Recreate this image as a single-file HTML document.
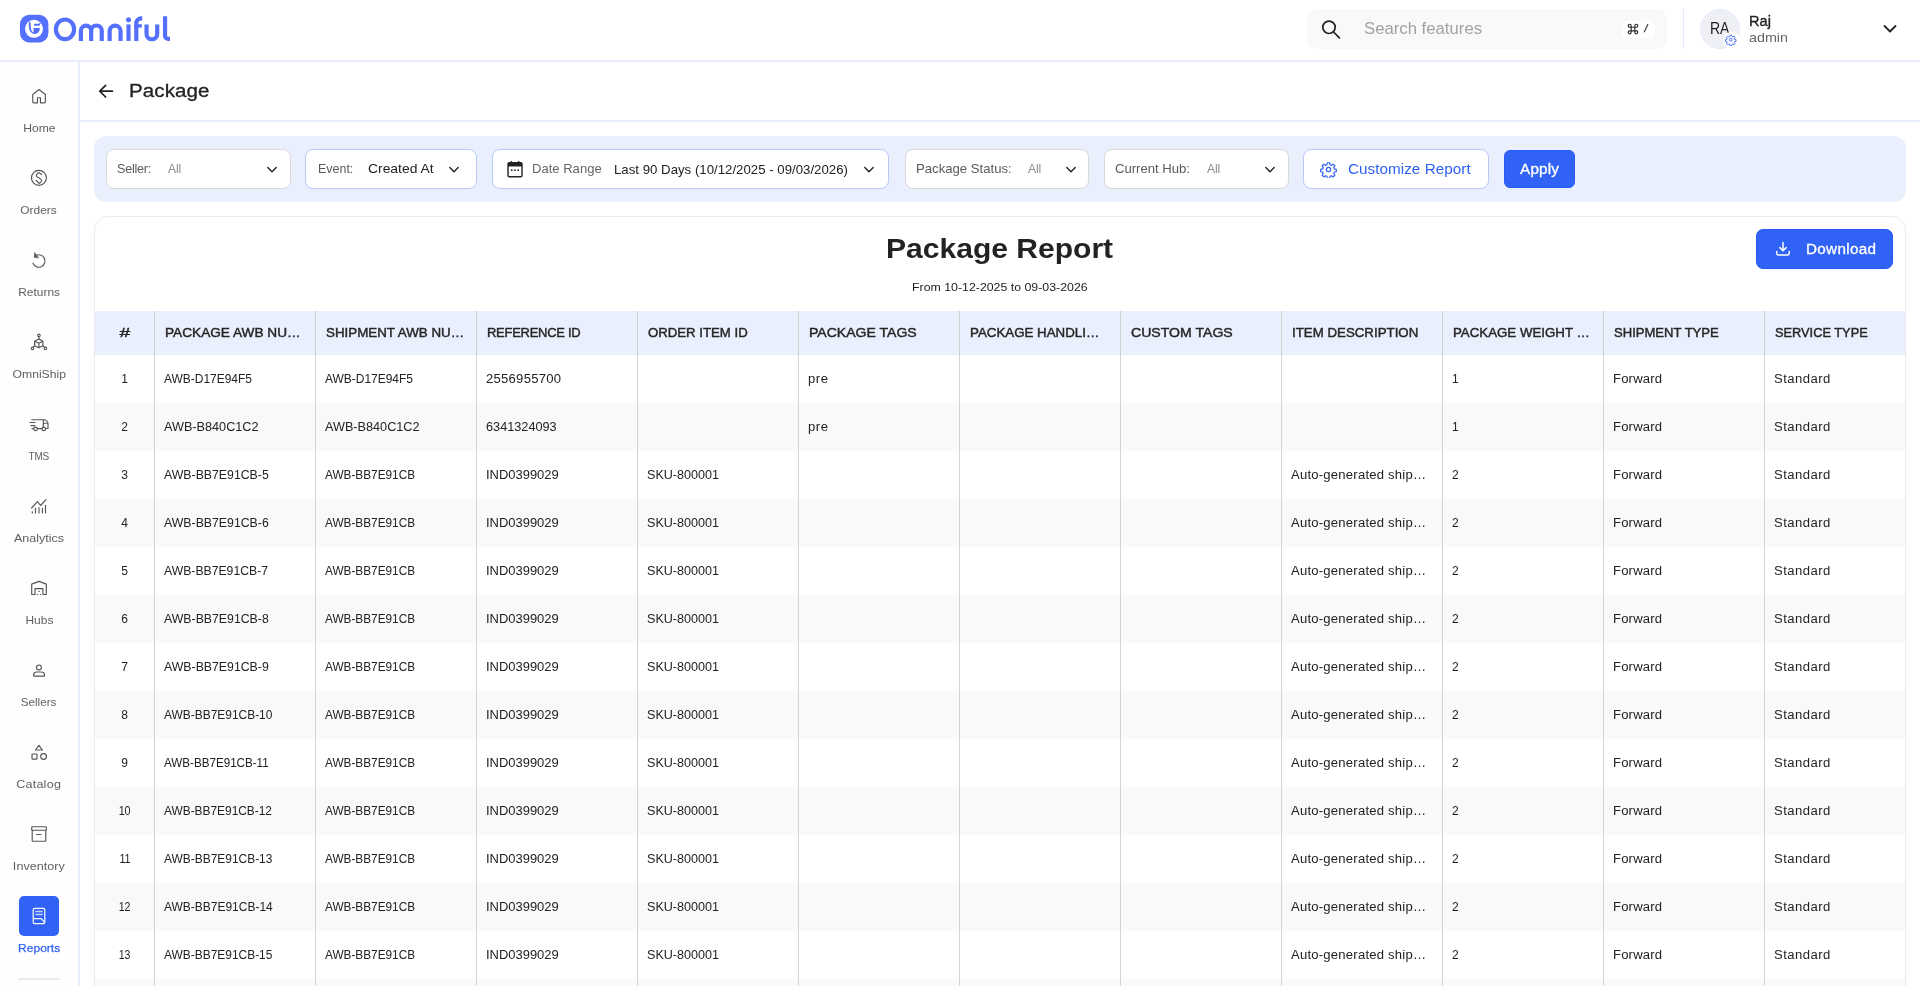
<!DOCTYPE html>
<html><head><meta charset="utf-8"><title>Package Report</title>
<style>
*{box-sizing:border-box;margin:0;padding:0}
html,body{width:1920px;height:986px;overflow:hidden;background:#fff;font-family:"Liberation Sans",sans-serif;color:#222;}
.abs{position:absolute}
span.t{white-space:nowrap;display:inline-block}
#hdr,#side,#main{will-change:transform}
#hdr{position:absolute;left:0;top:0;width:1920px;height:62px;background:#fff;border-bottom:2px solid #e8eefd}
#side{position:absolute;left:0;top:62px;width:80px;height:924px;background:#fefefe;border-right:2px solid #e8eefd}
#main{position:absolute;left:80px;top:62px;width:1840px;height:924px;background:#fff}
.nl{position:absolute;left:0;width:78px;height:16px;line-height:16px;text-align:center;font-size:11.5px;color:#5f5f5f}
#pghdr{position:absolute;left:0;top:0;width:1840px;height:60px;border-bottom:2px solid #e8eefd}
#fbar{position:absolute;left:14px;top:74px;width:1812px;height:66px;background:#e9effd;border-radius:12px}
.fb{position:absolute;top:13px;height:40px;background:#fff;border:1px solid #d9d9d9;border-radius:8px;font-size:13px;line-height:38px;color:#666}
.fb.blue{border-color:#b9c9fa}
.fb .k{position:absolute;top:0}
.fb .chev{position:absolute;top:14px;width:12px;height:12px}
#card{position:absolute;left:14px;top:154px;width:1812px;height:800px;border:1px solid #ececee;border-radius:14px 14px 0 0;background:#fff;overflow:hidden}
#thead{position:absolute;left:0;top:94px;width:1810px;height:44px;background:#e9effd}
.th{position:absolute;top:0;height:44px;line-height:44px;font-size:13.7px;-webkit-text-stroke:0.45px #262626;color:#262626;padding-left:10px;border-left:1px solid #cfcfcf}
.row{position:absolute;left:0;width:1810px;height:48px;font-size:12px;line-height:48px;color:#222}
.row.g{background:#f9f9f9}
.td{position:absolute;top:0;height:48px;padding-left:9px;border-left:1px solid #d4d4d4}
</style></head><body>
<div id="hdr">
<svg class="abs" style="left:0;top:0" width="200" height="60" viewBox="0 0 200 60">
<rect x="20" y="14.8" width="28.4" height="27.8" rx="9.5" ry="9.5" fill="#5570fc"/>
<circle cx="34" cy="28.8" r="9" fill="#fff"/>
<path d="M29.3 21.6C28 27 29 32.6 33.6 33.9C37.4 34.6 40.2 31.6 39.7 27.8L38.6 27.8L38.6 28L33.5 28L33.5 32.6C31.2 31.4 30.3 27.6 30.8 22.6Z" fill="#5570fc"/>
<path d="M34.2 28.6H38.9C39.2 31 37 33.6 34.2 33.2Z" fill="#5570fc"/>
<path d="M34.1 23.8H38.4L41 22.6L39.4 25.7H34.1Z" fill="#5570fc"/>
<g fill="none" stroke="#5570fc" stroke-width="4.2">
<ellipse cx="65" cy="29.35" rx="9.1" ry="9.85"/>
<path d="M80.9 40.9V30.8a5.125 5.125 0 0 1 10.25 0V40.9M91.15 30.8a5.3 5.3 0 0 1 10.6 0V40.9"/>
<path d="M109.65 40.9V31.15a5.45 5.45 0 0 1 10.9 0V40.9"/>
<path d="M128.5 24.4V40.9"/>
<path d="M136.3 40.9V23.3a5 5 0 0 1 5 -5h0.9"/>
<path d="M134.2 25.9H141.9" stroke-width="3.3"/>
<path d="M146.55 24.4V33.9a5.325 5.325 0 0 0 10.65 0V24.4"/>
<path d="M165.05 16.2V35.8a3 3 0 0 0 3 3H170"/>
</g>
<circle cx="128.5" cy="19.7" r="2.5" fill="#5570fc"/>
</svg>
<div class="abs" style="left:1307px;top:9px;width:360px;height:40px;background:#f9f9f9;border-radius:10px"></div>
<svg class="abs" style="left:1320px;top:18px" width="22" height="22" viewBox="0 0 22 22" fill="none" stroke="#222" stroke-width="1.7"><circle cx="9" cy="9.3" r="6.2"/><path d="M13.6 14L19.4 19.8" stroke-linecap="round"/></svg>
<span class="t abs" style="letter-spacing:0px;transform:scaleX(1.045);transform-origin:left center;left:1364px;top:18px;font-size:16px;line-height:22px;color:#a2a2a2">Search features</span>
<div class="abs" style="left:1622px;top:20.5px;width:33px;height:17.5px;background:#fff;border-radius:5px"></div>
<svg class="abs" style="left:1627px;top:23.2px" width="12" height="12" viewBox="0 0 12 12" fill="none" stroke="#2a2a2a" stroke-width="1.15"><path d="M4.2 4.2H7.8V7.8H4.2ZM4.2 4.2H2.7A1.5 1.5 0 1 1 4.2 2.7ZM7.8 4.2V2.7A1.5 1.5 0 1 1 9.3 4.2ZM7.8 7.8H9.3A1.5 1.5 0 1 1 7.8 9.3ZM4.2 7.8V9.3A1.5 1.5 0 1 1 2.7 7.8Z"/></svg>
<svg class="abs" style="left:1642px;top:22.2px" width="8" height="12" viewBox="0 0 8 12" fill="none" stroke="#333" stroke-width="1.1"><path d="M2.2 10.3L6 2"/></svg>
<div class="abs" style="left:1683px;top:9px;width:1px;height:40px;background:#e3e9fb"></div>
<div class="abs" style="left:1700px;top:9px;width:40px;height:40px;border-radius:20px;background:#eff0f5;border:1px solid #e6ebfd"></div>
<span class="t abs" style="letter-spacing:-0.25px;transform:scaleX(0.878);transform-origin:left center;left:1710.2px;top:17.6px;font-size:16px;line-height:22px;color:#222">RA</span>
<div class="abs" style="left:1722.5px;top:31.5px;width:17px;height:17px;border-radius:8.5px;background:#fff"></div>
<svg class="abs" style="left:1725.25px;top:34.25px" width="11.5" height="11.5" viewBox="0 0 24 24" fill="none" stroke="#3d66f2" stroke-width="2" stroke-linejoin="round"><circle cx="12" cy="12" r="3"/><path d="M10.3 2.5h3.4l.6 2.8 1.9.8 2.4-1.6 2.4 2.4-1.6 2.4.8 1.9 2.8.6v3.4l-2.8.6-.8 1.9 1.6 2.4-2.4 2.4-2.4-1.6-1.9.8-.6 2.8h-3.4l-.6-2.8-1.9-.8-2.4 1.6-2.4-2.4 1.6-2.4-.8-1.9-2.8-.6v-3.4l2.8-.6.8-1.9-1.6-2.4 2.4-2.4 2.4 1.6 1.9-.8z"/></svg>
<span class="t abs" style="letter-spacing:0px;transform:scaleX(0.977);transform-origin:left center;left:1749px;top:11px;font-size:15px;line-height:20px;color:#222;-webkit-text-stroke:0.35px #222">Raj</span>
<span class="t abs" style="letter-spacing:0px;transform:scaleX(1.06);transform-origin:left center;left:1749px;top:29px;font-size:13.5px;line-height:18px;color:#666">admin</span>
<svg class="abs" style="left:1882px;top:23px" width="16" height="12" viewBox="0 0 16 12" fill="none" stroke="#222" stroke-width="1.8" stroke-linecap="round" stroke-linejoin="round"><path d="M2.5 3L8 8.5L13.5 3"/></svg>

</div>
<div id="side">
<svg class="abs" style="left:27px;top:23px" width="24" height="24" viewBox="0 0 24 24" fill="none" stroke="#555" stroke-width="1.15" stroke-linecap="round"><path d="M5.75 9.5L12.05 4.5L18.35 9.5V16.9a.9.9 0 0 1-.9.9H13.45V12.75H10.45V17.8H6.65a.9.9 0 0 1-.9-.9Z" stroke-linejoin="round"/></svg>
<div class="nl" style="top:58px"><span class="t" style="letter-spacing:0px;transform:scaleX(1.056);transform-origin:center center;">Home</span></div>
<svg class="abs" style="left:27px;top:104px" width="24" height="24" viewBox="0 0 24 24" fill="none" stroke="#555" stroke-width="1.15" stroke-linecap="round"><circle cx="11.9" cy="11.85" r="7.5"/><path d="M14.7 8.5L11.5 6.6C10.2 7.6 9.3 8.6 9.3 9.7C9.3 11.6 14.7 12.2 14.7 14.6C14.7 15.8 13.4 16.8 12.2 17.4L9.2 14.5" stroke-linejoin="round"/></svg>
<div class="nl" style="top:140px"><span class="t" style="letter-spacing:0px;transform:scaleX(1.038);transform-origin:center center;">Orders</span></div>
<svg class="abs" style="left:27px;top:186.5px" width="24" height="24" viewBox="0 0 24 24" fill="none" stroke="#555" stroke-width="1.15" stroke-linecap="round"><path d="M8.6 6.7A6.2 6.2 0 1 1 6 14.2"/><path d="M7.6 3.8L7.2 8.2L11.3 8.9Z" fill="#555" stroke-width=".6" stroke-linejoin="round"/></svg>
<div class="nl" style="top:222px"><span class="t" style="letter-spacing:0px;transform:scaleX(1.04);transform-origin:center center;">Returns</span></div>
<svg class="abs" style="left:27px;top:269px" width="24" height="24" viewBox="0 0 24 24" fill="none" stroke="#555" stroke-width="1.15" stroke-linecap="round"><path d="M11.9 8L15.9 10.2V14.7L11.9 16.8L7.6 14.7V10.2ZM7.6 10.2L11.9 12.3L15.9 10.2M11.9 12.3V16.8" stroke-linejoin="round"/><circle cx="11.9" cy="4.4" r="1.25"/><circle cx="5.5" cy="17.4" r="1.25"/><circle cx="18.4" cy="17.4" r="1.25"/><path d="M11.9 5.7V8M7.6 14.7L6.3 16.4M15.9 14.7L17.6 16.4"/></svg>
<div class="nl" style="top:304px"><span class="t" style="letter-spacing:0px;transform:scaleX(1.059);transform-origin:center center;">OmniShip</span></div>
<svg class="abs" style="left:27px;top:351px" width="24" height="24" viewBox="0 0 24 24" fill="none" stroke="#555" stroke-width="1.15" stroke-linecap="round"><path d="M4.75 6.7H16.5C19 6.7 21 8.5 21 11V15.5H19M16.3 10.2H21M16.3 6.7V14M10.4 15.6H15M3 9.5H8M4 12.6H8M5 15.6H6.4" stroke-linejoin="round"/><circle cx="8.6" cy="15.9" r="1.75"/><circle cx="16.8" cy="15.9" r="1.75"/></svg>
<div class="nl" style="top:386px"><span class="t" style="letter-spacing:-0.25px;transform:scaleX(0.875);transform-origin:center center;">TMS</span></div>
<svg class="abs" style="left:27px;top:433px" width="24" height="24" viewBox="0 0 24 24" fill="none" stroke="#555" stroke-width="1.15" stroke-linecap="round"><path d="M4.6 13L10.4 6.7L13.6 10.5L19 4.6" stroke-linejoin="round"/><path d="M5.3 16.8V18M8.5 13.2V18M12 12.6V18M15.4 13.2V18M18.5 10.2V18"/></svg>
<div class="nl" style="top:468px"><span class="t" style="letter-spacing:0px;transform:scaleX(1.086);transform-origin:center center;">Analytics</span></div>
<svg class="abs" style="left:27px;top:515px" width="24" height="24" viewBox="0 0 24 24" fill="none" stroke="#555" stroke-width="1.15" stroke-linecap="round"><path d="M4.7 7.1L12.05 4.4L19.3 7.1V17.5H15.9V11.6H8V17.5H4.7Z" stroke-linejoin="round"/><path d="M10.2 17.5h.5M13.2 17.5h.5M11.6 14.4h.8" stroke-width="1"/></svg>
<div class="nl" style="top:550px"><span class="t" style="letter-spacing:0px;transform:scaleX(1.042);transform-origin:center center;">Hubs</span></div>
<svg class="abs" style="left:27px;top:597px" width="24" height="24" viewBox="0 0 24 24" fill="none" stroke="#555" stroke-width="1.15" stroke-linecap="round"><circle cx="11.9" cy="8.4" r="2.45"/><path d="M6.7 17.1V15.2C6.7 13.6 8.5 13 10 13H14C15.5 13 17.4 13.6 17.4 15.2V17.1Z" stroke-linejoin="round"/></svg>
<div class="nl" style="top:632px"><span class="t" style="letter-spacing:0px;transform:scaleX(1.015);transform-origin:center center;">Sellers</span></div>
<svg class="abs" style="left:27px;top:679px" width="24" height="24" viewBox="0 0 24 24" fill="none" stroke="#555" stroke-width="1.15" stroke-linecap="round"><path d="M11.9 4.3L15.4 9H8.4Z" stroke-linejoin="round"/><rect x="5" y="12.95" width="5" height="5.1" rx=".5"/><circle cx="16.6" cy="15.5" r="2.9"/></svg>
<div class="nl" style="top:714px"><span class="t" style="letter-spacing:0.23px;transform:scaleX(1.09);transform-origin:center center;">Catalog</span></div>
<svg class="abs" style="left:27px;top:761px" width="24" height="24" viewBox="0 0 24 24" fill="none" stroke="#555" stroke-width="1.15" stroke-linecap="round"><rect x="4.7" y="3.7" width="14.6" height="3.5" rx=".7"/><path d="M5.2 7.2V17.6a.6.6 0 0 0 .6.6H18.2a.6.6 0 0 0 .6-.6V7.2M9.5 11.5H13.9" stroke-linejoin="round"/></svg>
<div class="nl" style="top:796px"><span class="t" style="letter-spacing:0.05px;transform:scaleX(1.09);transform-origin:center center;">Inventory</span></div>
<div class="abs" style="left:19px;top:834px;width:40px;height:40px;border-radius:5px;background:#2f62f5"></div>
<svg class="abs" style="left:27px;top:842px" width="24" height="24" viewBox="0 0 24 24" fill="none" stroke="#fff" stroke-width="1.2" stroke-linejoin="round"><rect x="6.2" y="4.4" width="11.6" height="15.2" rx="1.4"/><path d="M6.2 14.6H14.2L17.8 18.4"/><path d="M8.4 7.6H15.6M8.4 10.4H15.6" stroke="#c8d4fd" stroke-width="1.5"/></svg>
<div class="nl" style="top:878px;color:#2f62f5;-webkit-text-stroke:0.25px #2f62f5"><span class="t" style="letter-spacing:0px;transform:scaleX(1.045);transform-origin:center center;">Reports</span></div>
<div class="abs" style="left:18px;top:916px;width:42px;height:2px;background:#ebebeb"></div>

</div>
<div id="main">
<div id="pghdr">
<svg class="abs" style="left:16px;top:19px" width="20" height="20" viewBox="0 0 20 20" fill="none" stroke="#222" stroke-width="1.7" stroke-linecap="round" stroke-linejoin="round"><path d="M16.4 10.2H3.8M9.6 4.4L3.8 10.2L9.6 16"/></svg>
<span class="t abs" style="letter-spacing:0.09px;transform:scaleX(1.14);transform-origin:left center;left:49.2px;top:16.5px;font-size:18px;line-height:24px;color:#222;-webkit-text-stroke:0.3px #222">Package</span>

</div>
<div id="fbar">
<div class="fb" style="left:12px;width:185px"><span class="t k" style="letter-spacing:-0.25px;transform:scaleX(0.967);transform-origin:left center;left:10.4px;color:#5a5a5a">Seller:</span><span class="t k" style="letter-spacing:-0.25px;transform:scaleX(0.939);transform-origin:left center;left:61px;color:#8c8c8c">All</span><svg class="chev" style="left:159px" viewBox="0 0 12 12" fill="none" stroke="#222" stroke-width="1.4" stroke-linecap="round" stroke-linejoin="round"><path d="M1.8 3.6L6 7.8L10.2 3.6"/></svg></div>
<div class="fb blue" style="left:211px;width:172px"><span class="t k" style="letter-spacing:0px;transform:scaleX(0.958);transform-origin:left center;left:12px;color:#5a5a5a">Event:</span><span class="t k" style="letter-spacing:0px;transform:scaleX(1.068);transform-origin:left center;left:61.7px;color:#222">Created At</span><svg class="chev" style="left:142.3px" viewBox="0 0 12 12" fill="none" stroke="#222" stroke-width="1.4" stroke-linecap="round" stroke-linejoin="round"><path d="M1.8 3.6L6 7.8L10.2 3.6"/></svg></div>
<div class="fb blue" style="left:398px;width:397px"><svg class="abs" style="left:13px;top:10px" width="18" height="18" viewBox="0 0 18 18"><path d="M3.4 2.6H14.6A1.4 1.4 0 0 1 16 4V15.4A1.4 1.4 0 0 1 14.6 16.8H3.4A1.4 1.4 0 0 1 2 15.4V4A1.4 1.4 0 0 1 3.4 2.6Z" fill="none" stroke="#222" stroke-width="1.4"/><path d="M2 3.6A1 1 0 0 1 3 2.6H15A1 1 0 0 1 16 3.6V6.6H2Z" fill="#222"/><rect x="4.6" y="1" width="1.6" height="3" rx=".8" fill="#222"/><rect x="11.8" y="1" width="1.6" height="3" rx=".8" fill="#222"/><rect x="5" y="9.4" width="1.6" height="1.6" fill="#222"/><rect x="8.2" y="9.4" width="1.6" height="1.6" fill="#222"/><rect x="11.4" y="9.4" width="1.6" height="1.6" fill="#222"/></svg><span class="t k" style="letter-spacing:0px;transform:scaleX(1.004);transform-origin:left center;left:39.3px;color:#666">Date Range</span><span class="t k" style="letter-spacing:0px;transform:scaleX(1.018);transform-origin:left center;left:121.3px;top:1px;color:#222">Last 90 Days (10/12/2025 - 09/03/2026)</span><svg class="chev" style="left:370px" viewBox="0 0 12 12" fill="none" stroke="#222" stroke-width="1.4" stroke-linecap="round" stroke-linejoin="round"><path d="M1.8 3.6L6 7.8L10.2 3.6"/></svg></div>
<div class="fb" style="left:811px;width:184px"><span class="t k" style="letter-spacing:0px;transform:scaleX(1.011);transform-origin:left center;left:10px;color:#5a5a5a">Package Status:</span><span class="t k" style="letter-spacing:-0.25px;transform:scaleX(0.939);transform-origin:left center;left:122.3px;color:#8c8c8c">All</span><svg class="chev" style="left:159px" viewBox="0 0 12 12" fill="none" stroke="#222" stroke-width="1.4" stroke-linecap="round" stroke-linejoin="round"><path d="M1.8 3.6L6 7.8L10.2 3.6"/></svg></div>
<div class="fb" style="left:1010px;width:185px"><span class="t k" style="letter-spacing:0px;transform:scaleX(1.008);transform-origin:left center;left:10px;color:#5a5a5a">Current Hub:</span><span class="t k" style="letter-spacing:-0.25px;transform:scaleX(0.939);transform-origin:left center;left:101.7px;color:#8c8c8c">All</span><svg class="chev" style="left:159px" viewBox="0 0 12 12" fill="none" stroke="#222" stroke-width="1.4" stroke-linecap="round" stroke-linejoin="round"><path d="M1.8 3.6L6 7.8L10.2 3.6"/></svg></div>
<div class="fb blue" style="left:1209px;width:186px"><svg class="abs" style="left:15.5px;top:10.5px" width="17" height="17" viewBox="0 0 24 24" fill="none" stroke="#2f62f5" stroke-width="1.7" stroke-linejoin="round"><circle cx="12" cy="12" r="3.1"/><path d="M10.3 2.5h3.4l.6 2.8 1.9.8 2.4-1.6 2.4 2.4-1.6 2.4.8 1.9 2.8.6v3.4l-2.8.6-.8 1.9 1.6 2.4-2.4 2.4-2.4-1.6-1.9.8-.6 2.8h-3.4l-.6-2.8-1.9-.8-2.4 1.6-2.4-2.4 1.6-2.4-.8-1.9-2.8-.6v-3.4l2.8-.6.8-1.9-1.6-2.4 2.4-2.4 2.4 1.6 1.9-.8z"/></svg><span class="t k" style="letter-spacing:0.03px;transform:scaleX(1.09);transform-origin:left center;left:44.4px;color:#2f62f5;font-size:14px">Customize Report</span></div>
<div class="abs" style="left:1410px;top:14px;width:71px;height:38px;background:#2f62f5;border:1px solid #2a5af1;border-radius:6px"><span class="t abs" style="letter-spacing:0.19px;transform:scaleX(1.09);transform-origin:left center;left:15px;top:-1px;line-height:38px;font-size:14px;color:#fff;-webkit-text-stroke:0.3px #fff">Apply</span></div>

</div>
<div id="card">
<span class="t abs" style="letter-spacing:0px;transform:scaleX(1.073);transform-origin:left center;left:791px;top:14px;font-size:28px;font-weight:bold;line-height:36px;color:#222">Package Report</span>
<span class="t abs" style="letter-spacing:0px;transform:scaleX(1.073);transform-origin:left center;left:816.9px;top:62px;font-size:11.5px;line-height:16px;color:#222">From 10-12-2025 to 09-03-2026</span>
<div class="abs" style="left:1661px;top:12px;width:137px;height:40px;background:#2f62f5;border:1px solid #2a5af1;border-radius:7px"><svg class="abs" style="left:17px;top:10px" width="18" height="18" viewBox="0 0 18 18" fill="none" stroke="#fff" stroke-width="1.5" stroke-linecap="round" stroke-linejoin="round"><path d="M9 2.6V10.6M5.8 7.6L9 10.8L12.2 7.6M2.8 11.4V13.4A1.6 1.6 0 0 0 4.4 15H13.6A1.6 1.6 0 0 0 15.2 13.4V11.4"/></svg><span class="t abs" style="letter-spacing:0.28px;transform:scaleX(1.09);transform-origin:left center;left:48.7px;top:-1px;line-height:40px;font-size:14px;color:#fff;-webkit-text-stroke:0.3px #fff">Download</span></div>

<div id="thead"><div class="th" style="left:0;width:59px;border-left:none;padding:0;text-align:center"><span class="t" style="transform:scaleX(1.4)">#</span></div><div class="th" style="left:59px;width:161px"><span class="t" style="letter-spacing:0px;transform:scaleX(0.997);transform-origin:left center;">PACKAGE AWB NU…</span></div><div class="th" style="left:220px;width:161px"><span class="t" style="letter-spacing:0px;transform:scaleX(0.976);transform-origin:left center;">SHIPMENT AWB NU…</span></div><div class="th" style="left:381px;width:161px"><span class="t" style="letter-spacing:-0.25px;transform:scaleX(0.945);transform-origin:left center;">REFERENCE ID</span></div><div class="th" style="left:542px;width:161px"><span class="t" style="letter-spacing:0px;transform:scaleX(0.964);transform-origin:left center;">ORDER ITEM ID</span></div><div class="th" style="left:703px;width:161px"><span class="t" style="letter-spacing:0px;transform:scaleX(1.026);transform-origin:left center;">PACKAGE TAGS</span></div><div class="th" style="left:864px;width:161px"><span class="t" style="letter-spacing:0px;transform:scaleX(0.973);transform-origin:left center;">PACKAGE HANDLI…</span></div><div class="th" style="left:1025px;width:161px"><span class="t" style="letter-spacing:-0.0px;transform:scaleX(1.029);transform-origin:left center;">CUSTOM TAGS</span></div><div class="th" style="left:1186px;width:161px"><span class="t" style="letter-spacing:0px;transform:scaleX(0.971);transform-origin:left center;">ITEM DESCRIPTION</span></div><div class="th" style="left:1347px;width:161px"><span class="t" style="letter-spacing:0px;transform:scaleX(0.97);transform-origin:left center;">PACKAGE WEIGHT …</span></div><div class="th" style="left:1508px;width:161px"><span class="t" style="letter-spacing:0px;transform:scaleX(0.954);transform-origin:left center;">SHIPMENT TYPE</span></div><div class="th" style="left:1669px;width:161px"><span class="t" style="letter-spacing:0px;transform:scaleX(0.935);transform-origin:left center;">SERVICE TYPE</span></div></div>
<div class="row" style="top:138px"><div class="td" style="left:0;width:59px;border-left:none;padding:0;text-align:center">1</div><div class="td" style="left:59px;width:161px"><span class="t" style="letter-spacing:0px;transform:scaleX(0.997);transform-origin:left center;">AWB-D17E94F5</span></div><div class="td" style="left:220px;width:161px"><span class="t" style="letter-spacing:0px;transform:scaleX(0.997);transform-origin:left center;">AWB-D17E94F5</span></div><div class="td" style="left:381px;width:161px"><span class="t" style="letter-spacing:0.23px;transform:scaleX(1.09);transform-origin:left center;">2556955700</span></div><div class="td" style="left:542px;width:161px"></div><div class="td" style="left:703px;width:161px"><span class="t" style="letter-spacing:0.5px;transform:scaleX(1.09);transform-origin:left center;">pre</span></div><div class="td" style="left:864px;width:161px"></div><div class="td" style="left:1025px;width:161px"></div><div class="td" style="left:1186px;width:161px"></div><div class="td" style="left:1347px;width:161px"><span class="t">1</span></div><div class="td" style="left:1508px;width:161px"><span class="t" style="letter-spacing:0.16px;transform:scaleX(1.09);transform-origin:left center;">Forward</span></div><div class="td" style="left:1669px;width:161px"><span class="t" style="letter-spacing:0.43px;transform:scaleX(1.09);transform-origin:left center;">Standard</span></div></div>
<div class="row g" style="top:186px"><div class="td" style="left:0;width:59px;border-left:none;padding:0;text-align:center">2</div><div class="td" style="left:59px;width:161px"><span class="t" style="letter-spacing:0px;transform:scaleX(1.055);transform-origin:left center;">AWB-B840C1C2</span></div><div class="td" style="left:220px;width:161px"><span class="t" style="letter-spacing:0px;transform:scaleX(1.055);transform-origin:left center;">AWB-B840C1C2</span></div><div class="td" style="left:381px;width:161px"><span class="t" style="letter-spacing:0px;transform:scaleX(1.059);transform-origin:left center;">6341324093</span></div><div class="td" style="left:542px;width:161px"></div><div class="td" style="left:703px;width:161px"><span class="t" style="letter-spacing:0.5px;transform:scaleX(1.09);transform-origin:left center;">pre</span></div><div class="td" style="left:864px;width:161px"></div><div class="td" style="left:1025px;width:161px"></div><div class="td" style="left:1186px;width:161px"></div><div class="td" style="left:1347px;width:161px"><span class="t">1</span></div><div class="td" style="left:1508px;width:161px"><span class="t" style="letter-spacing:0.16px;transform:scaleX(1.09);transform-origin:left center;">Forward</span></div><div class="td" style="left:1669px;width:161px"><span class="t" style="letter-spacing:0.43px;transform:scaleX(1.09);transform-origin:left center;">Standard</span></div></div>
<div class="row" style="top:234px"><div class="td" style="left:0;width:59px;border-left:none;padding:0;text-align:center">3</div><div class="td" style="left:59px;width:161px"><span class="t" style="letter-spacing:0px;transform:scaleX(1.024);transform-origin:left center;">AWB-BB7E91CB-5</span></div><div class="td" style="left:220px;width:161px"><span class="t" style="letter-spacing:0px;transform:scaleX(0.983);transform-origin:left center;">AWB-BB7E91CB</span></div><div class="td" style="left:381px;width:161px"><span class="t" style="letter-spacing:0px;transform:scaleX(1.079);transform-origin:left center;">IND0399029</span></div><div class="td" style="left:542px;width:161px"><span class="t" style="letter-spacing:0px;transform:scaleX(1.048);transform-origin:left center;">SKU-800001</span></div><div class="td" style="left:703px;width:161px"></div><div class="td" style="left:864px;width:161px"></div><div class="td" style="left:1025px;width:161px"></div><div class="td" style="left:1186px;width:161px"><span class="t" style="letter-spacing:0.2px;transform:scaleX(1.09);transform-origin:left center;">Auto-generated ship…</span></div><div class="td" style="left:1347px;width:161px"><span class="t">2</span></div><div class="td" style="left:1508px;width:161px"><span class="t" style="letter-spacing:0.16px;transform:scaleX(1.09);transform-origin:left center;">Forward</span></div><div class="td" style="left:1669px;width:161px"><span class="t" style="letter-spacing:0.43px;transform:scaleX(1.09);transform-origin:left center;">Standard</span></div></div>
<div class="row g" style="top:282px"><div class="td" style="left:0;width:59px;border-left:none;padding:0;text-align:center">4</div><div class="td" style="left:59px;width:161px"><span class="t" style="letter-spacing:0px;transform:scaleX(1.024);transform-origin:left center;">AWB-BB7E91CB-6</span></div><div class="td" style="left:220px;width:161px"><span class="t" style="letter-spacing:0px;transform:scaleX(0.983);transform-origin:left center;">AWB-BB7E91CB</span></div><div class="td" style="left:381px;width:161px"><span class="t" style="letter-spacing:0px;transform:scaleX(1.079);transform-origin:left center;">IND0399029</span></div><div class="td" style="left:542px;width:161px"><span class="t" style="letter-spacing:0px;transform:scaleX(1.048);transform-origin:left center;">SKU-800001</span></div><div class="td" style="left:703px;width:161px"></div><div class="td" style="left:864px;width:161px"></div><div class="td" style="left:1025px;width:161px"></div><div class="td" style="left:1186px;width:161px"><span class="t" style="letter-spacing:0.2px;transform:scaleX(1.09);transform-origin:left center;">Auto-generated ship…</span></div><div class="td" style="left:1347px;width:161px"><span class="t">2</span></div><div class="td" style="left:1508px;width:161px"><span class="t" style="letter-spacing:0.16px;transform:scaleX(1.09);transform-origin:left center;">Forward</span></div><div class="td" style="left:1669px;width:161px"><span class="t" style="letter-spacing:0.43px;transform:scaleX(1.09);transform-origin:left center;">Standard</span></div></div>
<div class="row" style="top:330px"><div class="td" style="left:0;width:59px;border-left:none;padding:0;text-align:center">5</div><div class="td" style="left:59px;width:161px"><span class="t" style="letter-spacing:0px;transform:scaleX(1.017);transform-origin:left center;">AWB-BB7E91CB-7</span></div><div class="td" style="left:220px;width:161px"><span class="t" style="letter-spacing:0px;transform:scaleX(0.983);transform-origin:left center;">AWB-BB7E91CB</span></div><div class="td" style="left:381px;width:161px"><span class="t" style="letter-spacing:0px;transform:scaleX(1.079);transform-origin:left center;">IND0399029</span></div><div class="td" style="left:542px;width:161px"><span class="t" style="letter-spacing:0px;transform:scaleX(1.048);transform-origin:left center;">SKU-800001</span></div><div class="td" style="left:703px;width:161px"></div><div class="td" style="left:864px;width:161px"></div><div class="td" style="left:1025px;width:161px"></div><div class="td" style="left:1186px;width:161px"><span class="t" style="letter-spacing:0.2px;transform:scaleX(1.09);transform-origin:left center;">Auto-generated ship…</span></div><div class="td" style="left:1347px;width:161px"><span class="t">2</span></div><div class="td" style="left:1508px;width:161px"><span class="t" style="letter-spacing:0.16px;transform:scaleX(1.09);transform-origin:left center;">Forward</span></div><div class="td" style="left:1669px;width:161px"><span class="t" style="letter-spacing:0.43px;transform:scaleX(1.09);transform-origin:left center;">Standard</span></div></div>
<div class="row g" style="top:378px"><div class="td" style="left:0;width:59px;border-left:none;padding:0;text-align:center">6</div><div class="td" style="left:59px;width:161px"><span class="t" style="letter-spacing:0px;transform:scaleX(1.024);transform-origin:left center;">AWB-BB7E91CB-8</span></div><div class="td" style="left:220px;width:161px"><span class="t" style="letter-spacing:0px;transform:scaleX(0.983);transform-origin:left center;">AWB-BB7E91CB</span></div><div class="td" style="left:381px;width:161px"><span class="t" style="letter-spacing:0px;transform:scaleX(1.079);transform-origin:left center;">IND0399029</span></div><div class="td" style="left:542px;width:161px"><span class="t" style="letter-spacing:0px;transform:scaleX(1.048);transform-origin:left center;">SKU-800001</span></div><div class="td" style="left:703px;width:161px"></div><div class="td" style="left:864px;width:161px"></div><div class="td" style="left:1025px;width:161px"></div><div class="td" style="left:1186px;width:161px"><span class="t" style="letter-spacing:0.2px;transform:scaleX(1.09);transform-origin:left center;">Auto-generated ship…</span></div><div class="td" style="left:1347px;width:161px"><span class="t">2</span></div><div class="td" style="left:1508px;width:161px"><span class="t" style="letter-spacing:0.16px;transform:scaleX(1.09);transform-origin:left center;">Forward</span></div><div class="td" style="left:1669px;width:161px"><span class="t" style="letter-spacing:0.43px;transform:scaleX(1.09);transform-origin:left center;">Standard</span></div></div>
<div class="row" style="top:426px"><div class="td" style="left:0;width:59px;border-left:none;padding:0;text-align:center">7</div><div class="td" style="left:59px;width:161px"><span class="t" style="letter-spacing:0px;transform:scaleX(1.024);transform-origin:left center;">AWB-BB7E91CB-9</span></div><div class="td" style="left:220px;width:161px"><span class="t" style="letter-spacing:0px;transform:scaleX(0.983);transform-origin:left center;">AWB-BB7E91CB</span></div><div class="td" style="left:381px;width:161px"><span class="t" style="letter-spacing:0px;transform:scaleX(1.079);transform-origin:left center;">IND0399029</span></div><div class="td" style="left:542px;width:161px"><span class="t" style="letter-spacing:0px;transform:scaleX(1.048);transform-origin:left center;">SKU-800001</span></div><div class="td" style="left:703px;width:161px"></div><div class="td" style="left:864px;width:161px"></div><div class="td" style="left:1025px;width:161px"></div><div class="td" style="left:1186px;width:161px"><span class="t" style="letter-spacing:0.2px;transform:scaleX(1.09);transform-origin:left center;">Auto-generated ship…</span></div><div class="td" style="left:1347px;width:161px"><span class="t">2</span></div><div class="td" style="left:1508px;width:161px"><span class="t" style="letter-spacing:0.16px;transform:scaleX(1.09);transform-origin:left center;">Forward</span></div><div class="td" style="left:1669px;width:161px"><span class="t" style="letter-spacing:0.43px;transform:scaleX(1.09);transform-origin:left center;">Standard</span></div></div>
<div class="row g" style="top:474px"><div class="td" style="left:0;width:59px;border-left:none;padding:0;text-align:center">8</div><div class="td" style="left:59px;width:161px"><span class="t" style="letter-spacing:0px;transform:scaleX(0.995);transform-origin:left center;">AWB-BB7E91CB-10</span></div><div class="td" style="left:220px;width:161px"><span class="t" style="letter-spacing:0px;transform:scaleX(0.983);transform-origin:left center;">AWB-BB7E91CB</span></div><div class="td" style="left:381px;width:161px"><span class="t" style="letter-spacing:0px;transform:scaleX(1.079);transform-origin:left center;">IND0399029</span></div><div class="td" style="left:542px;width:161px"><span class="t" style="letter-spacing:0px;transform:scaleX(1.048);transform-origin:left center;">SKU-800001</span></div><div class="td" style="left:703px;width:161px"></div><div class="td" style="left:864px;width:161px"></div><div class="td" style="left:1025px;width:161px"></div><div class="td" style="left:1186px;width:161px"><span class="t" style="letter-spacing:0.2px;transform:scaleX(1.09);transform-origin:left center;">Auto-generated ship…</span></div><div class="td" style="left:1347px;width:161px"><span class="t">2</span></div><div class="td" style="left:1508px;width:161px"><span class="t" style="letter-spacing:0.16px;transform:scaleX(1.09);transform-origin:left center;">Forward</span></div><div class="td" style="left:1669px;width:161px"><span class="t" style="letter-spacing:0.43px;transform:scaleX(1.09);transform-origin:left center;">Standard</span></div></div>
<div class="row" style="top:522px"><div class="td" style="left:0;width:59px;border-left:none;padding:0;text-align:center">9</div><div class="td" style="left:59px;width:161px"><span class="t" style="letter-spacing:0px;transform:scaleX(0.969);transform-origin:left center;">AWB-BB7E91CB-11</span></div><div class="td" style="left:220px;width:161px"><span class="t" style="letter-spacing:0px;transform:scaleX(0.983);transform-origin:left center;">AWB-BB7E91CB</span></div><div class="td" style="left:381px;width:161px"><span class="t" style="letter-spacing:0px;transform:scaleX(1.079);transform-origin:left center;">IND0399029</span></div><div class="td" style="left:542px;width:161px"><span class="t" style="letter-spacing:0px;transform:scaleX(1.048);transform-origin:left center;">SKU-800001</span></div><div class="td" style="left:703px;width:161px"></div><div class="td" style="left:864px;width:161px"></div><div class="td" style="left:1025px;width:161px"></div><div class="td" style="left:1186px;width:161px"><span class="t" style="letter-spacing:0.2px;transform:scaleX(1.09);transform-origin:left center;">Auto-generated ship…</span></div><div class="td" style="left:1347px;width:161px"><span class="t">2</span></div><div class="td" style="left:1508px;width:161px"><span class="t" style="letter-spacing:0.16px;transform:scaleX(1.09);transform-origin:left center;">Forward</span></div><div class="td" style="left:1669px;width:161px"><span class="t" style="letter-spacing:0.43px;transform:scaleX(1.09);transform-origin:left center;">Standard</span></div></div>
<div class="row g" style="top:570px"><div class="td" style="left:0;width:59px;border-left:none;padding:0;text-align:center"><span class="t" style="letter-spacing:-0.25px;transform:scaleX(0.9);transform-origin:center center;">10</span></div><div class="td" style="left:59px;width:161px"><span class="t" style="letter-spacing:0px;transform:scaleX(0.991);transform-origin:left center;">AWB-BB7E91CB-12</span></div><div class="td" style="left:220px;width:161px"><span class="t" style="letter-spacing:0px;transform:scaleX(0.983);transform-origin:left center;">AWB-BB7E91CB</span></div><div class="td" style="left:381px;width:161px"><span class="t" style="letter-spacing:0px;transform:scaleX(1.079);transform-origin:left center;">IND0399029</span></div><div class="td" style="left:542px;width:161px"><span class="t" style="letter-spacing:0px;transform:scaleX(1.048);transform-origin:left center;">SKU-800001</span></div><div class="td" style="left:703px;width:161px"></div><div class="td" style="left:864px;width:161px"></div><div class="td" style="left:1025px;width:161px"></div><div class="td" style="left:1186px;width:161px"><span class="t" style="letter-spacing:0.2px;transform:scaleX(1.09);transform-origin:left center;">Auto-generated ship…</span></div><div class="td" style="left:1347px;width:161px"><span class="t">2</span></div><div class="td" style="left:1508px;width:161px"><span class="t" style="letter-spacing:0.16px;transform:scaleX(1.09);transform-origin:left center;">Forward</span></div><div class="td" style="left:1669px;width:161px"><span class="t" style="letter-spacing:0.43px;transform:scaleX(1.09);transform-origin:left center;">Standard</span></div></div>
<div class="row" style="top:618px"><div class="td" style="left:0;width:59px;border-left:none;padding:0;text-align:center"><span class="t" style="letter-spacing:-0.25px;transform:scaleX(0.9);transform-origin:center center;">11</span></div><div class="td" style="left:59px;width:161px"><span class="t" style="letter-spacing:0px;transform:scaleX(0.995);transform-origin:left center;">AWB-BB7E91CB-13</span></div><div class="td" style="left:220px;width:161px"><span class="t" style="letter-spacing:0px;transform:scaleX(0.983);transform-origin:left center;">AWB-BB7E91CB</span></div><div class="td" style="left:381px;width:161px"><span class="t" style="letter-spacing:0px;transform:scaleX(1.079);transform-origin:left center;">IND0399029</span></div><div class="td" style="left:542px;width:161px"><span class="t" style="letter-spacing:0px;transform:scaleX(1.048);transform-origin:left center;">SKU-800001</span></div><div class="td" style="left:703px;width:161px"></div><div class="td" style="left:864px;width:161px"></div><div class="td" style="left:1025px;width:161px"></div><div class="td" style="left:1186px;width:161px"><span class="t" style="letter-spacing:0.2px;transform:scaleX(1.09);transform-origin:left center;">Auto-generated ship…</span></div><div class="td" style="left:1347px;width:161px"><span class="t">2</span></div><div class="td" style="left:1508px;width:161px"><span class="t" style="letter-spacing:0.16px;transform:scaleX(1.09);transform-origin:left center;">Forward</span></div><div class="td" style="left:1669px;width:161px"><span class="t" style="letter-spacing:0.43px;transform:scaleX(1.09);transform-origin:left center;">Standard</span></div></div>
<div class="row g" style="top:666px"><div class="td" style="left:0;width:59px;border-left:none;padding:0;text-align:center"><span class="t" style="letter-spacing:-0.25px;transform:scaleX(0.885);transform-origin:center center;">12</span></div><div class="td" style="left:59px;width:161px"><span class="t" style="letter-spacing:0px;transform:scaleX(0.998);transform-origin:left center;">AWB-BB7E91CB-14</span></div><div class="td" style="left:220px;width:161px"><span class="t" style="letter-spacing:0px;transform:scaleX(0.983);transform-origin:left center;">AWB-BB7E91CB</span></div><div class="td" style="left:381px;width:161px"><span class="t" style="letter-spacing:0px;transform:scaleX(1.079);transform-origin:left center;">IND0399029</span></div><div class="td" style="left:542px;width:161px"><span class="t" style="letter-spacing:0px;transform:scaleX(1.048);transform-origin:left center;">SKU-800001</span></div><div class="td" style="left:703px;width:161px"></div><div class="td" style="left:864px;width:161px"></div><div class="td" style="left:1025px;width:161px"></div><div class="td" style="left:1186px;width:161px"><span class="t" style="letter-spacing:0.2px;transform:scaleX(1.09);transform-origin:left center;">Auto-generated ship…</span></div><div class="td" style="left:1347px;width:161px"><span class="t">2</span></div><div class="td" style="left:1508px;width:161px"><span class="t" style="letter-spacing:0.16px;transform:scaleX(1.09);transform-origin:left center;">Forward</span></div><div class="td" style="left:1669px;width:161px"><span class="t" style="letter-spacing:0.43px;transform:scaleX(1.09);transform-origin:left center;">Standard</span></div></div>
<div class="row" style="top:714px"><div class="td" style="left:0;width:59px;border-left:none;padding:0;text-align:center"><span class="t" style="letter-spacing:-0.25px;transform:scaleX(0.885);transform-origin:center center;">13</span></div><div class="td" style="left:59px;width:161px"><span class="t" style="letter-spacing:0px;transform:scaleX(0.995);transform-origin:left center;">AWB-BB7E91CB-15</span></div><div class="td" style="left:220px;width:161px"><span class="t" style="letter-spacing:0px;transform:scaleX(0.983);transform-origin:left center;">AWB-BB7E91CB</span></div><div class="td" style="left:381px;width:161px"><span class="t" style="letter-spacing:0px;transform:scaleX(1.079);transform-origin:left center;">IND0399029</span></div><div class="td" style="left:542px;width:161px"><span class="t" style="letter-spacing:0px;transform:scaleX(1.048);transform-origin:left center;">SKU-800001</span></div><div class="td" style="left:703px;width:161px"></div><div class="td" style="left:864px;width:161px"></div><div class="td" style="left:1025px;width:161px"></div><div class="td" style="left:1186px;width:161px"><span class="t" style="letter-spacing:0.2px;transform:scaleX(1.09);transform-origin:left center;">Auto-generated ship…</span></div><div class="td" style="left:1347px;width:161px"><span class="t">2</span></div><div class="td" style="left:1508px;width:161px"><span class="t" style="letter-spacing:0.16px;transform:scaleX(1.09);transform-origin:left center;">Forward</span></div><div class="td" style="left:1669px;width:161px"><span class="t" style="letter-spacing:0.43px;transform:scaleX(1.09);transform-origin:left center;">Standard</span></div></div>
<div class="row g" style="top:762px"><div class="td" style="left:0;width:59px;border-left:none;padding:0;text-align:center"><span class="t" style="letter-spacing:-0.25px;transform:scaleX(0.885);transform-origin:center center;">14</span></div><div class="td" style="left:59px;width:161px"><span class="t" style="letter-spacing:0px;transform:scaleX(0.996);transform-origin:left center;">AWB-BB7E91CB-16</span></div><div class="td" style="left:220px;width:161px"><span class="t" style="letter-spacing:0px;transform:scaleX(0.983);transform-origin:left center;">AWB-BB7E91CB</span></div><div class="td" style="left:381px;width:161px"><span class="t" style="letter-spacing:0px;transform:scaleX(1.079);transform-origin:left center;">IND0399029</span></div><div class="td" style="left:542px;width:161px"><span class="t" style="letter-spacing:0px;transform:scaleX(1.048);transform-origin:left center;">SKU-800001</span></div><div class="td" style="left:703px;width:161px"></div><div class="td" style="left:864px;width:161px"></div><div class="td" style="left:1025px;width:161px"></div><div class="td" style="left:1186px;width:161px"><span class="t" style="letter-spacing:0.2px;transform:scaleX(1.09);transform-origin:left center;">Auto-generated ship…</span></div><div class="td" style="left:1347px;width:161px"><span class="t">2</span></div><div class="td" style="left:1508px;width:161px"><span class="t" style="letter-spacing:0.16px;transform:scaleX(1.09);transform-origin:left center;">Forward</span></div><div class="td" style="left:1669px;width:161px"><span class="t" style="letter-spacing:0.43px;transform:scaleX(1.09);transform-origin:left center;">Standard</span></div></div>

</div>
</div>
</body></html>
